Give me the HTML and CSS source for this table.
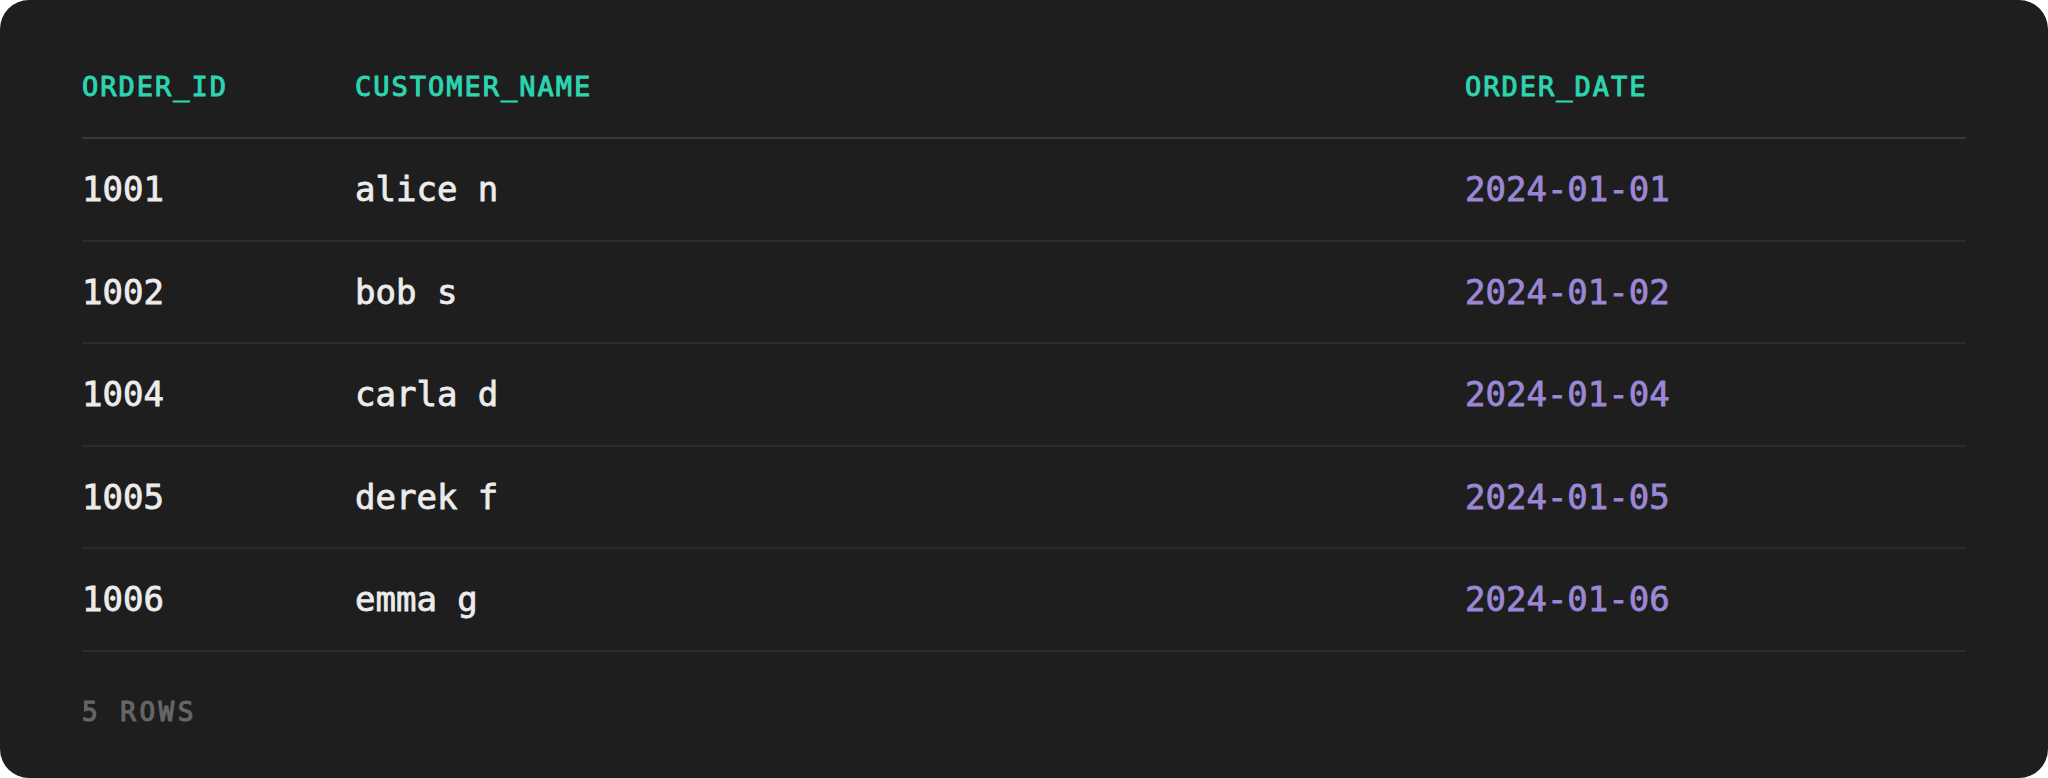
FILE: index.html
```html
<!DOCTYPE html>
<html lang="en">
<head>
    <meta charset="UTF-8">
    <meta name="viewport" content="width=device-width, initial-scale=1.0">
    <title>Query result</title>
    <link rel="stylesheet" href="styles.css">
</head>
<body>
    <div class="card">
        <table class="result-table">
            <thead>
                <tr>
                    <th class="col-id">ORDER_ID</th>
                    <th class="col-name">CUSTOMER_NAME</th>
                    <th class="col-date">ORDER_DATE</th>
                </tr>
            </thead>
            <tbody>
                <tr>
                    <td>1001</td>
                    <td>alice n</td>
                    <td class="date">2024-01-01</td>
                </tr>
                <tr>
                    <td>1002</td>
                    <td>bob s</td>
                    <td class="date">2024-01-02</td>
                </tr>
                <tr>
                    <td>1004</td>
                    <td>carla d</td>
                    <td class="date">2024-01-04</td>
                </tr>
                <tr>
                    <td>1005</td>
                    <td>derek f</td>
                    <td class="date">2024-01-05</td>
                </tr>
                <tr>
                    <td>1006</td>
                    <td>emma g</td>
                    <td class="date">2024-01-06</td>
                </tr>
            </tbody>
        </table>

        <div class="row-count">5 ROWS</div>
    </div>
</body>
</html>
```

FILE: styles.css
```css
body {
    margin: 0;
    background-color: #FFFFFF;
    font-family: "DejaVu Sans Mono", "Liberation Mono", monospace;
}
.card {
    box-sizing: border-box;
    width: 2048px;
    height: 778px;
    padding: 40px 82px 0 82px;
    background-color: #1E1E1E;
    border-radius: 29px;
}
.result-table {
    width: 100%;
    border-collapse: collapse;
}
.result-table th {
    padding: 30px 0 34px 0;
    text-align: left;
    font-size: 27px;
    line-height: 33px;
    font-weight: normal;
    letter-spacing: 2px;
    color: #2DD4B0;
    -webkit-text-stroke: 1px #2DD4B0;
    border-bottom: 2px solid #3A3A3C;
}
.col-id {
    width: 273px;
}
.col-name {
    width: 1110px;
}
.result-table td {
    padding: 30px 0 30.5px 0;
    font-size: 34px;
    line-height: 40px;
    color: #ECECEC;
    -webkit-text-stroke: 0.8px #ECECEC;
    border-bottom: 2px solid #2B2B2B;
}
.result-table td.date {
    color: #9B87D6;
    -webkit-text-stroke: 0.8px #9B87D6;
}
.row-count {
    padding-top: 45px;
    font-size: 26px;
    line-height: 30px;
    font-weight: normal;
    letter-spacing: 3.5px;
    color: #666666;
    -webkit-text-stroke: 1.1px #666666;
}
```
